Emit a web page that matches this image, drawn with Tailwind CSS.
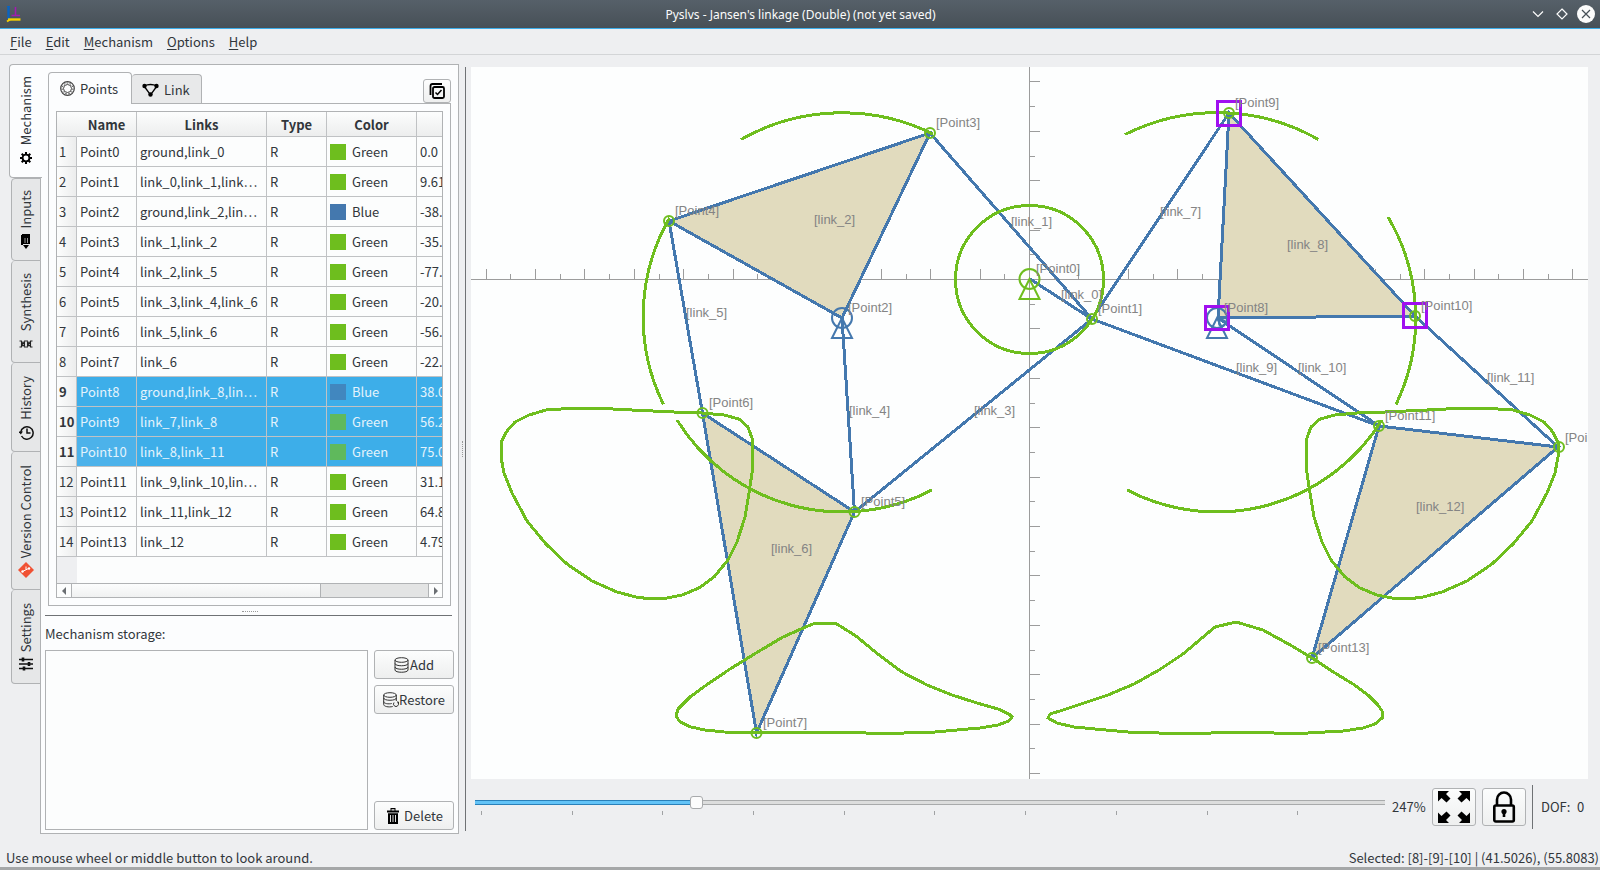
<!DOCTYPE html>
<html lang="en">
<head>
<meta charset="utf-8">
<title>Pyslvs - Jansen's linkage (Double)</title>
<script src="https://cdn.jsdelivr.net/npm/@tailwindcss/browser@4"></script>
</head>
<body class="flex h-screen flex-col overflow-hidden bg-[#eeeff1] font-['Noto_Sans_CJK_SC',sans-serif] text-[13px] leading-5 text-[#31363b]">

<!-- Window title -->
<header class="flex h-[29px] shrink-0 items-center border-b border-[#3daee9] bg-linear-to-b from-[#566069] to-[#475057] pl-[6px] pr-[5px] text-[#fcfcfc]">
  <svg class="h-[18px] w-4 shrink-0" viewBox="0 0 16 18"><path d="M2.500 1v13" stroke="#0a63c0" stroke-width="2.400"/><path d="M1 1.500h3" stroke="#0a63c0"/><path d="M2 14.500h12.500" stroke="#f5cf00" stroke-width="2.400"/><path d="M1 16.500l3-2" stroke="#f5cf00" stroke-width="2"/><path d="M9.500 2v8M5.500 10.500h8.500" stroke="#a21caf" stroke-width="1.600"/></svg>
  <h1 class="flex-1 pl-[50px] pt-px text-center font-['Noto_Sans',sans-serif] text-[12px]">Pyslvs - Jansen's linkage (Double) (not yet saved)</h1>
  <div class="flex shrink-0 items-center gap-[6px]">
    <button aria-label="Minimize"><svg class="size-[18px]" viewBox="0 0 18 18" fill="none" stroke="#fcfcfc" stroke-width="1.200"><path d="M4 6.500l5 5 5-5"/></svg></button>
    <button aria-label="Maximize"><svg class="size-[18px]" viewBox="0 0 18 18" fill="none" stroke="#fcfcfc" stroke-width="1.200"><path d="M9 4l5 5-5 5-5-5z"/></svg></button>
    <button aria-label="Close"><svg class="size-[18px]" viewBox="0 0 18 18"><circle cx="9" cy="9" r="9" fill="#fcfcfc"/><path d="M5 5l8 8M13 5l-8 8" stroke="#475057" stroke-width="1.200"/></svg></button>
  </div>
</header>

<!-- Menu bar -->
<nav class="flex h-[26px] shrink-0 items-center gap-[14px] border-b border-[#d3d5d7] pl-[10px]">
  <button><u class="underline-offset-2">F</u>ile</button>
  <button><u class="underline-offset-2">E</u>dit</button>
  <button><u class="underline-offset-2">M</u>echanism</button>
  <button><u class="underline-offset-2">O</u>ptions</button>
  <button><u class="underline-offset-2">H</u>elp</button>
</nav>

<main class="flex min-h-0 flex-1 pt-[9px]">
  <!-- Side tabs -->
  <div role="tablist" class="z-10 flex w-[42px] shrink-0 flex-col whitespace-nowrap pl-[9px]">
    <button role="tab" aria-selected="true" class="flex h-[114px] flex-col items-center justify-end gap-[7px] rounded-l border border-r-0 border-[#b0b2b4] bg-[#fcfdfe] pb-[13px]">
      <span class="rotate-180 [writing-mode:vertical-rl]">Mechanism</span>
      <svg class="size-3" viewBox="0 0 14 14"><circle cx="7" cy="7" r="4" fill="none" stroke="#000" stroke-width="2.200"/><path d="M7 0v3M7 11v3M0 7h3M11 7h3M2 2l2 2M10 10l2 2M12 2l-2 2M4 10l-2 2" stroke="#000" stroke-width="2.400"/></svg>
    </button>
    <button role="tab" class="ml-[2px] mr-px flex h-[83px] flex-col items-center justify-end gap-[5px] rounded-l border border-[#b0b2b4] bg-[#e6e7e8] pb-[11px]">
      <span class="rotate-180 [writing-mode:vertical-rl]">Inputs</span>
      <svg class="h-[15px] w-3" viewBox="0 0 12 15"><path d="M2 1h8v9H2z" fill="#000"/><path d="M1 1h2v10H1zM2 0h8v3H2z" fill="#000"/><path d="M5 4v5M7.500 4v5" stroke="#999"/><path d="M3 11h6l-3 4z" fill="#000"/></svg>
    </button>
    <button role="tab" class="ml-[2px] mr-px flex h-[102px] flex-col items-center justify-end gap-[9px] rounded-l border border-t-0 border-[#b0b2b4] bg-[#e6e7e8] pb-[14px]">
      <span class="rotate-180 [writing-mode:vertical-rl]">Synthesis</span>
      <svg class="h-[8px] w-[14px]" viewBox="0 0 14 8" fill="none" stroke="#222"><path d="M.5 1h2l3 6h3l3-6h2M.5 7h2l3-6h3l3 6h2M2.500 1v6M5.500 2v4M8.500 2v4M11.500 1v6" stroke-width="1.100"/></svg>
    </button>
    <button role="tab" class="ml-[2px] mr-px flex h-[89px] flex-col items-center justify-end gap-[5px] rounded-l border border-t-0 border-[#b0b2b4] bg-[#e6e7e8] pb-[11px]">
      <span class="rotate-180 [writing-mode:vertical-rl]">History</span>
      <svg class="size-[15px]" viewBox="0 0 15 15" fill="none" stroke="#111" stroke-width="1.500"><path d="M2.500 11a6.200 6.200 0 1 0-.7-4M8 3.500V8h3.500"/><path d="M-.5 6.500h4.500l-2.200 3z" fill="#111" stroke="none"/></svg>
    </button>
    <button role="tab" class="ml-[2px] mr-px flex h-[138px] flex-col items-center justify-end gap-[4px] rounded-l border border-t-0 border-[#b0b2b4] bg-[#e6e7e8] pb-[11px]">
      <span class="rotate-180 [writing-mode:vertical-rl]">Version Control</span>
      <svg class="size-4" viewBox="0 0 16 16"><path d="M8 0l8 8-8 8-8-8z" fill="#f05133"/><path d="M4.500 9.500l6-3M8 4.500v3" stroke="#fff"/><circle cx="11" cy="6.500" r="1.200" fill="#fff"/><circle cx="4.500" cy="9.500" r="1.200" fill="#fff"/></svg>
    </button>
    <button role="tab" class="ml-[2px] mr-px flex h-[94px] flex-col items-center justify-end gap-[5px] rounded-l border border-t-0 border-[#b0b2b4] bg-[#e6e7e8] pb-[12px]">
      <span class="rotate-180 [writing-mode:vertical-rl]">Settings</span>
      <svg class="size-[14px]" viewBox="0 0 14 14" stroke="#111" stroke-width="1.600"><path d="M0 2.500h14M0 7h14M0 11.500h14"/><path d="M4 .5v4M10 5v4M5 9.500v4" stroke-width="2.600"/></svg>
    </button>
  </div>

  <!-- Left panel -->
  <section class="-ml-[2px] mb-9 flex w-[419px] shrink-0 flex-col border border-[#b0b2b4] bg-[#fcfdfe] px-[4px] pb-[3px] pt-[7px]">
    <div class="flex items-end px-[3px]">
      <div role="tablist" class="flex items-end">
        <button role="tab" aria-selected="true" class="relative -mb-px flex h-8 w-[84px] items-center gap-[5px] rounded-t border border-b-0 border-[#b0b2b4] bg-[#fcfdfe] pl-[11px]">
          <svg class="size-[15px]" viewBox="0 0 15 15" fill="none" stroke="#444"><circle cx="7.500" cy="7.500" r="6.800" stroke-width="1.200"/><circle cx="7.500" cy="7.500" r="4"/><circle cx="7.500" cy="7.500" r="5.400" stroke-dasharray="1.500 1.500"/></svg>
          Points
        </button>
        <button role="tab" class="flex h-[29px] w-[70px] items-center gap-[5px] rounded-t border border-b-0 border-l-0 border-[#b0b2b4] bg-[#e8e9ea] pl-[10px] pt-[2px]">
          <svg class="h-[14px] w-[17px]" viewBox="0 0 17 14" fill="none" stroke="#000"><path d="M2 3q6.500-3 13 0M2 3l6.500 9L15 3" stroke-width="1.300"/><circle cx="2.500" cy="3" r="2.200" fill="#000" stroke="none"/><circle cx="14.500" cy="3" r="2.200" fill="#000" stroke="none"/><circle cx="8.500" cy="11.500" r="2.200" fill="#000" stroke="none"/></svg>
          Link
        </button>
      </div>
      <button aria-label="Select all" class="ml-auto flex h-6 w-7 items-center justify-center rounded-[3px] border border-[#b0b2b4] bg-linear-to-b from-[#fdfdfd] to-[#eeefef]">
        <svg class="size-4" viewBox="0 0 16 16" fill="none" stroke="#000" stroke-width="1.800"><path d="M1.500 12V3Q1.500 1 3.500 1H13"/><rect x="4" y="4" width="11" height="11" rx="1.500"/><path d="M6.500 9.500l2 2 4-4.500" stroke-width="1.500"/></svg>
      </button>
    </div>

    <div class="mx-[3px] flex min-h-0 flex-1 flex-col border border-[#b0b2b4] p-[7px]">
      <div class="flex min-h-0 flex-1 flex-col border border-[#b0b2b4] bg-[#fcfdfd]">
        <div class="flex min-h-0 flex-1 overflow-hidden bg-[linear-gradient(90deg,#eeeff1_20px,transparent_20px)]">
          <table class="w-[440px] shrink-0 table-fixed border-separate border-spacing-0 self-start">
            <colgroup><col class="w-[20px]"><col class="w-[60px]"><col class="w-[130px]"><col class="w-[60px]"><col class="w-[90px]"><col class="w-[80px]"></colgroup>
            <thead>
              <tr class="h-[25px] bg-linear-to-b from-[#fcfdfd] to-[#eceded] *:border-b *:border-r *:border-[#c0c2c4] *:p-0 *:pt-px *:font-bold">
                <td class="border-r-transparent!"></td><th>Name</th><th>Links</th><th>Type</th><th>Color</th><th></th>
              </tr>
            </thead>
            <tbody id="points"></tbody>
          </table>
        </div>
        <div class="flex h-[14px] shrink-0 border-t border-[#b0b2b4]">
          <button aria-label="Scroll left" class="flex w-[14px] items-center justify-center"><svg class="size-2" viewBox="0 0 8 8"><path d="M6 0v8L2 4z" fill="#6b6f73"/></svg></button>
          <div class="flex flex-1 bg-[#e3e4e4]"><div class="w-[70%] border-x border-[#b0b2b4] bg-linear-to-b from-[#fcfdfd] to-[#f0f1f1]"></div></div>
          <button aria-label="Scroll right" class="flex w-[14px] items-center justify-center border-l border-[#b0b2b4]"><svg class="size-2" viewBox="0 0 8 8"><path d="M2 0v8l4-4z" fill="#6b6f73"/></svg></button>
        </div>
      </div>
    </div>

    <div class="flex h-[9px] shrink-0 items-center justify-center pt-[2px]"><span class="w-4 border-t border-dotted border-[#999]"></span></div>
    <div class="mr-[2px] shrink-0 border-t border-[#6f7275] pt-2">
      <label for="storage">Mechanism storage:</label>
    </div>
    <div class="mt-[6px] flex h-[180px] shrink-0 gap-[6px]">
      <select id="storage" size="8" class="min-w-0 flex-1 border border-[#b0b2b4] bg-[#fcfdfd]"></select>
      <div class="flex w-20 flex-col gap-[6px]">
        <button class="flex h-[29px] items-center justify-center rounded-[3px] border border-[#b0b2b4] bg-linear-to-b from-[#fcfdfd] to-[#eeefef]">
          <svg class="size-4" viewBox="0 0 16 16" fill="none" stroke="#333"><ellipse cx="7.500" cy="3" rx="6.500" ry="2.300"/><path d="M1 3v10c0 3 13 3 13 0V3M1 6.500c0 3 13 3 13 0M1 10c0 3 13 3 13 0"/></svg>Add
        </button>
        <button class="flex h-[29px] items-center justify-center rounded-[3px] border border-[#b0b2b4] bg-linear-to-b from-[#fcfdfd] to-[#eeefef]">
          <svg class="size-4 shrink-0" viewBox="0 0 16 16" fill="none" stroke="#333"><ellipse cx="7" cy="3" rx="6.300" ry="2.300"/><path d="M.7 3v9.500c0 2 5 3 9 2M13.300 3v6M.7 6c0 3 12.600 3 12.600 0M.7 9.500c0 2.200 5 2.800 8 2"/><path d="M11 10.500a2.500 2.500 0 1 0 4 0M14 10h1.500v2"/></svg>Restore
        </button>
        <button class="mt-auto flex h-[29px] items-center justify-center gap-[3px] rounded-[3px] border border-[#b0b2b4] bg-linear-to-b from-[#fcfdfd] to-[#eeefef]">
          <svg class="size-4" viewBox="0 0 16 16"><path d="M2 2.500h12v2H2zM5.500 0h5v2.500H9.500V1.200h-3V2.500H5.500zM3 5.200h10V16H3z" fill="#000"/><path d="M5.500 7v7M8 7v7M10.500 7v7" stroke="#ddd"/></svg>Delete
        </button>
      </div>
    </div>
  </section>

  <div class="flex w-[6px] shrink-0 items-center justify-center pb-9"><span class="h-4 border-l border-dotted border-[#999]"></span></div>

  <!-- Canvas and its tools -->
  <section class="mb-[39px] mt-[3px] flex min-w-0 flex-1 flex-col border-l border-[#6f7275]">
    <div class="ml-[5px] mr-3 min-h-0 flex-1 bg-[#fdfefe]">
      <svg class="size-full" role="img" aria-label="Linkage diagram">
        <g transform="translate(-471 -67)">
          <path id="axes" fill="none" stroke="#9c9c9c" shape-rendering="crispEdges"/>
          <g fill="#e1dbbe" stroke="#4478ae" stroke-width="3" shape-rendering="crispEdges">
            <path d="M842 318L930 133 669 221zM854.500 512L702.500 413 756.500 733zM1218 318L1229 113 1415 316zM1379 426L1558 447 1312 658z"/>
            <path fill="none" d="M1030 279L1092 319L930 133M1092 319L854.500 512L842 318M669 221L702.500 413M1092 319L1229 113M1092 319L1379 426L1218 318M1415 316L1558 447"/>
          </g>
          <g fill="none" stroke="#6ebe1e" stroke-width="3" shape-rendering="crispEdges">
            <circle cx="1029.500" cy="279.500" r="74"/>
            <path d="M741 139.500A205 205 0 0 1 933 134M669.500 218A198.500 198.500 0 0 0 663.500 404.500M677 420A194.400 194.400 0 0 0 932 490"/>
            <path d="M1318.500 139.500A205 205 0 0 0 1125 134.500M1388 217A198.500 198.500 0 0 1 1396 404.500M1382 420A194.400 194.400 0 0 1 1127 490"/>
            <path id="foot" d="M575 408L594 408 632 410 674 412 702 413 724 415 739 419 748 427 752 438 753 452 752 473 749 493 745 517 737 542 728 560 714 577 699 588 682 595 667 598 651 599 636 597 617 592 592 581 567 564 546 544 527 521 512 493 504 473 501 457 501 442 507 431 515 422 529 415 546 410 561 409z"/>
            <use href="#foot" transform="translate(2059 0) scale(-1 1)"/>
            <path d="M814 623.500L836 623.500 856 636 879 655 902 672 927 685 952 695 977 703 998 709 1009 714 1012 717 1009 721 998 725 980 728 957 730 935 732 889 733.500 842 732.500 756 732.500 724 732 705 730 691 727 680 722 676 716 678 709 690 697 705 686 730 669 756 653 783 637 801 629z"/>
            <path d="M1236 622L1263 630 1292 646 1312 658 1335 673 1353 684 1368 695 1378 705 1382 711 1382 718 1375 724 1363 728 1343 731 1299 733.500 1248 732.500 1175 733.500 1128 732 1095 729 1074 727 1057 723 1048 718 1050 714 1063 710 1084 703 1108 695 1134 684 1159 670 1183 654 1215 627z"/>
          </g>
          <g fill="none" stroke="#6ebe1e" stroke-width="2">
            <circle cx="1029.500" cy="279" r="10"/><path d="M1029.500 279l-10 20h20z"/>
            <circle cx="1092" cy="319" r="5"/><circle cx="930" cy="133" r="5"/><circle cx="669" cy="221" r="5"/><circle cx="854.500" cy="512" r="5"/><circle cx="702.500" cy="413" r="5"/><circle cx="756.500" cy="733" r="5"/><circle cx="1229" cy="113" r="5"/><circle cx="1415" cy="316" r="5"/><circle cx="1379" cy="426" r="5"/><circle cx="1559" cy="447" r="5"/><circle cx="1312" cy="658" r="5"/>
          </g>
          <g fill="none" stroke="#4478ae" stroke-width="2">
            <circle cx="842" cy="318" r="10"/><path d="M842 318l-10 20h20z"/>
            <circle cx="1217" cy="318" r="10"/><path d="M1217 318l-10 20h20z"/>
            <circle cx="1222" cy="323" r="3"/>
          </g>
          <path fill="none" stroke="#a010f0" stroke-width="3" d="M1217.500 101.500h23v24h-23zM1205.500 306.500h23v23h-23zM1403.500 303.500h23v24h-23z"/>
          <g id="labels" class="fill-[#848484] font-['Liberation_Sans',sans-serif] text-[13px]"></g>
        </g>
      </svg>
    </div>

    <div class="flex h-[52px] shrink-0 items-center pl-[9px] pt-1">
      <div class="min-w-0 flex-1 pb-1">
        <input type="range" aria-label="Zoom" min="10" max="1000" value="247" class="block h-[13px] w-full appearance-none bg-[linear-gradient(90deg,#2980b9_24%,#a8aaab_24%)] bg-[length:100%_5px] bg-center bg-no-repeat [&::-webkit-slider-thumb]:size-[13px] [&::-webkit-slider-thumb]:appearance-none [&::-webkit-slider-thumb]:rounded-[3px] [&::-webkit-slider-thumb]:border [&::-webkit-slider-thumb]:border-[#a8aaac] [&::-webkit-slider-thumb]:bg-[#fcfcfc] [&::-webkit-slider-runnable-track]:bg-[linear-gradient(90deg,#62c3f7_24%,#dcdddd_24%)] [&::-webkit-slider-runnable-track]:bg-[length:100%_3px] [&::-webkit-slider-runnable-track]:bg-center [&::-webkit-slider-runnable-track]:bg-no-repeat">
        <div class="mt-[2px] flex h-1 overflow-hidden px-[6px] *:shrink-0 *:basis-[10.1%] *:border-l *:border-[#a0a2a4]"><i></i><i></i><i></i><i></i><i></i><i></i><i></i><i></i><i></i><i></i></div>
      </div>
      <output class="ml-[7px] w-10">247%</output>
      <button aria-label="Zoom to fit" class="flex h-[38px] w-11 items-center justify-center rounded-[3px] border border-[#b0b2b4] bg-linear-to-b from-[#fcfdfd] to-[#eeefef]">
        <svg class="size-8" viewBox="0 0 32 32"><g id="arrow"><path d="M0 0h11L8 3l4.500 4.500-4 4L3.500 7 0 10.500z"/></g><use href="#arrow" transform="translate(32 0) scale(-1 1)"/><use href="#arrow" transform="translate(0 32) scale(1 -1)"/><use href="#arrow" transform="translate(32 32) scale(-1 -1)"/></svg>
      </button>
      <button aria-label="Lock" class="ml-[6px] flex h-[38px] w-11 items-center justify-center rounded-[3px] border border-[#b0b2b4] bg-linear-to-b from-[#fcfdfd] to-[#eeefef]">
        <svg class="h-8 w-6" viewBox="0 0 24 32" fill="none" stroke="#000" stroke-width="2.600"><rect x="2.300" y="14.500" width="19.500" height="16" rx="1.500"/><path d="M5 14V8.500a7 7 0 0 1 14 0V14"/><circle cx="12" cy="20.500" r="2.600" fill="#000" stroke="none"/><path d="M12 20v6"/></svg>
      </button>
      <div class="ml-[6px] h-11 border-l border-[#6f7275]"></div>
      <span class="ml-2 w-9">DOF:</span>
      <span class="w-[23px]">0</span>
    </div>
  </section>
</main>

<footer class="-mt-9 flex h-9 shrink-0 items-end justify-between border-b-3 border-[#a5a7a8] pl-[6px] pr-px leading-[18px]">
  <span>Use mouse wheel or middle button to look around.</span>
  <span>Selected: [8]-[9]-[10] | (41.5026), (55.8083)</span>
</footer>

<script>
const rows = [
  ['Point0','ground,link_0','Green','0.0'],
  ['Point1','link_0,link_1,link⋯','Green','9.61'],
  ['Point2','ground,link_2,lin⋯','Blue','-38.'],
  ['Point3','link_1,link_2','Green','-35.'],
  ['Point4','link_2,link_5','Green','-77.'],
  ['Point5','link_3,link_4,link_6','Green','-20.'],
  ['Point6','link_5,link_6','Green','-56.'],
  ['Point7','link_6','Green','-22.'],
  ['Point8','ground,link_8,lin⋯','Blue','38.0'],
  ['Point9','link_7,link_8','Green','56.2'],
  ['Point10','link_8,link_11','Green','75.0'],
  ['Point11','link_9,link_10,lin⋯','Green','31.1'],
  ['Point12','link_11,link_12','Green','64.8'],
  ['Point13','link_12','Green','4.79']
];
const selected = [8, 9, 10];
document.getElementById('points').innerHTML = rows.map(([name, links, color, x], i) => {
  const on = selected.includes(i);
  const blue = color === 'Blue';
  const swatch = blue ? (on ? 'bg-[#4187bf]' : 'bg-[#4478ae]') : (on ? 'bg-[#5fb95c]' : 'bg-[#6ebe1e]');
  return `<tr class="h-[30px] *:overflow-hidden *:whitespace-nowrap *:border-b *:border-r *:border-[#c0c2c4] *:py-0 *:pr-0 ${on ? 'text-[#e4f3fc]' : ''}">
    <th class="bg-linear-to-r from-[#fcfdfd] to-[#eceded] pl-[2px] text-left text-[#31363b] ${on ? 'font-bold' : 'font-normal'}">${i + 1}</th>
    <td class="pl-[3px] ${on ? (i === 10 ? 'bg-[#4cb2ea]' : 'bg-[#3daee9]') : ''}">${name}</td>
    <td class="pl-[3px] ${on ? 'bg-[#3daee9]' : ''}">${links}</td>
    <td class="pl-[3px] ${on ? 'bg-[#3daee9]' : ''}">R</td>
    <td class="pl-[3px] ${on ? 'bg-[#3daee9]' : ''}"><span class="flex items-center gap-[6px]"><i class="size-4 ${swatch}"></i>${color}</span></td>
    <td class="pl-[3px] ${on ? 'bg-[#3daee9]' : ''}">${x}</td></tr>`;
}).join('');

// Axes with a tick every 24.7 px; every second tick is long.
let d = 'M471 279.5H1588M1029.500 67V779';
for (let k = -28; k <= 28; k++) {
  if (!k) continue;
  const len = k % 2 ? 5 : 10, o = k * 24.7;
  const x = Math.floor(1029.500 + o) + .5, y = Math.floor(279.5 + o) + .5;
  if (x > 471 && x < 1588) d += `M${x} 279V${279 - len}`;
  if (y > 67 && y < 779) d += `M1030 ${y}h${len}`;
}
document.getElementById('axes').setAttribute('d', d);

const labels = [
  ['Point0',1036,273],['Point1',1098,313],['Point2',848,312],['Point3',936,127],['Point4',675,215],['Point5',861,506],['Point6',709,407],['Point7',763,727],['Point8',1224,312],['Point9',1235,107],['Point10',1421,310],['Point11',1385,420],['Point12',1565,442],['Point13',1318,652],
  ['link_0',1061,299],['link_1',1011,226],['link_2',814,224],['link_3',974,415],['link_4',849,415],['link_5',686,317],['link_6',771,553],['link_7',1160,216],['link_8',1287,249],['link_9',1236,372],['link_10',1298,372],['link_11',1487,382],['link_12',1416,511]
];
document.getElementById('labels').innerHTML = labels.map(([t, x, y]) => `<text x="${x}" y="${y}">[${t}]</text>`).join('');
</script>
</body>
</html>
